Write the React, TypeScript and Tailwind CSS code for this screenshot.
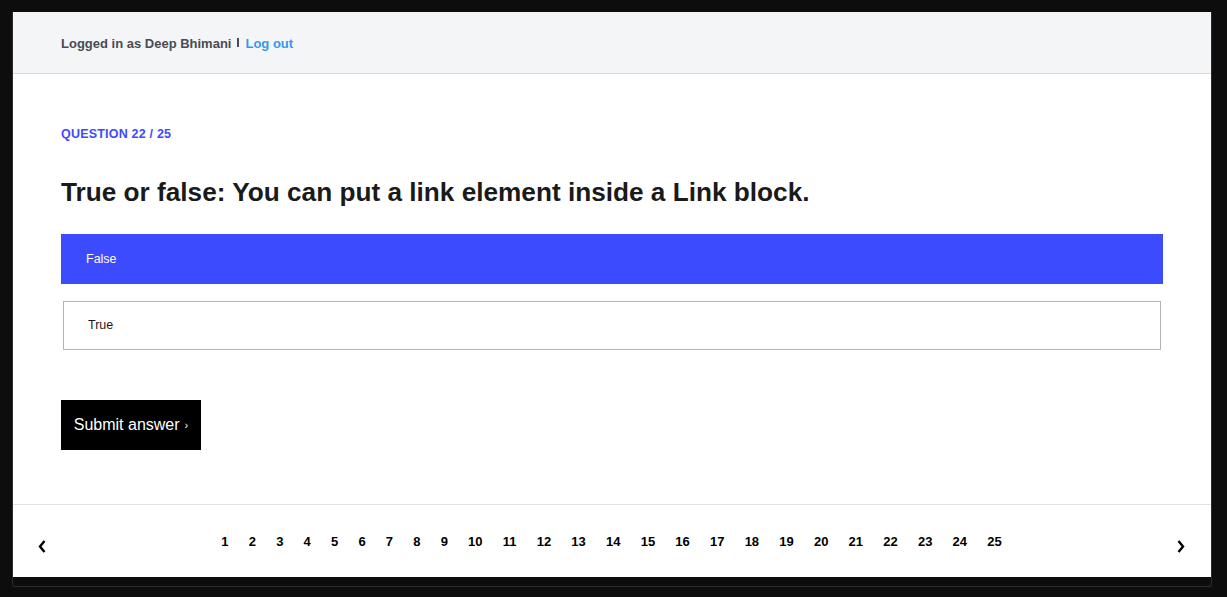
const pages = Array.from({ length: 25 }, (_, i) => i + 1);

function Chevron({ dir }: { dir: "left" | "right" }) {
  return (
    <svg width="8" height="13" viewBox="0 0 8 13" className="text-black">
      <polyline
        points={dir === "left" ? "6.5,1 2,6.5 6.5,12" : "1.5,1 6,6.5 1.5,12"}
        fill="none"
        stroke="currentColor"
        strokeWidth="2.4"
      />
    </svg>
  );
}

export default function App() {
  return (
    <div className="h-[597px] w-full bg-[#0d0d0d] pt-[12px] pl-[12px] font-['Liberation_Sans',Arial,sans-serif]">
      <div className="h-[575px] w-[1200px] rounded-b-[3px] border border-t-0 border-[#2c2c2c]">
        <div className="flex h-[565px] flex-col bg-white">
          <div className="flex h-[62px] items-center border-b border-[#d6d8db] bg-[#f4f5f7] pl-[48px] pt-[2px] text-[13px] font-bold">
            <span className="text-[#4b4b50]">Logged in as Deep Bhimani</span>
            <span className="mx-[6px] mb-[3px] h-[9px] w-[2px] bg-[#4b4b50]" />
            <a href="#" className="text-[#3898ec]">
              Log out
            </a>
          </div>

          <div className="flex flex-1 flex-col px-[48px]">
            <div className="mt-[51px] text-[12.5px] font-bold tracking-[0.2px] text-[#3d4bff]">
              QUESTION 22 / 25
            </div>
            <h1 className="mt-[32px] text-[26.2px] font-bold leading-[32px] text-[#1a1a1a]">
              True or false: You can put a link element inside a Link block.
            </h1>

            <div className="mt-[26px] flex flex-col gap-[17px]">
              <div className="flex h-[50px] items-center bg-[#3d4bff] pl-[25px] pt-px text-[12.5px] text-white">
                False
              </div>
              <div className="mx-[2px] flex h-[49px] items-center border border-[#b3b3b3] pl-[24px] pt-px text-[12.5px] text-[#1a1a1a]">
                True
              </div>
            </div>

            <button className="mt-[50px] flex h-[50px] w-[140px] items-center justify-center bg-black text-[16px] text-white">
              Submit answer <span className="ml-[5px] text-[11px]">›</span>
            </button>
          </div>

          <div className="flex h-[73px] items-center border-t border-[#dde3e8]">
            <div className="flex w-[58px] justify-center pt-[10px]">
              <Chevron dir="left" />
            </div>
            <div className="flex flex-1 justify-center pr-[1px] pt-[2px]">
              {pages.map((p) => (
                <a
                  key={p}
                  href="#"
                  className="px-[10.1px] text-[13px] font-bold text-black"
                >
                  {p}
                </a>
              ))}
            </div>
            <div className="flex w-[58px] justify-center pr-[2px] pt-[10px]">
              <Chevron dir="right" />
            </div>
          </div>
        </div>
      </div>
    </div>
  );
}
